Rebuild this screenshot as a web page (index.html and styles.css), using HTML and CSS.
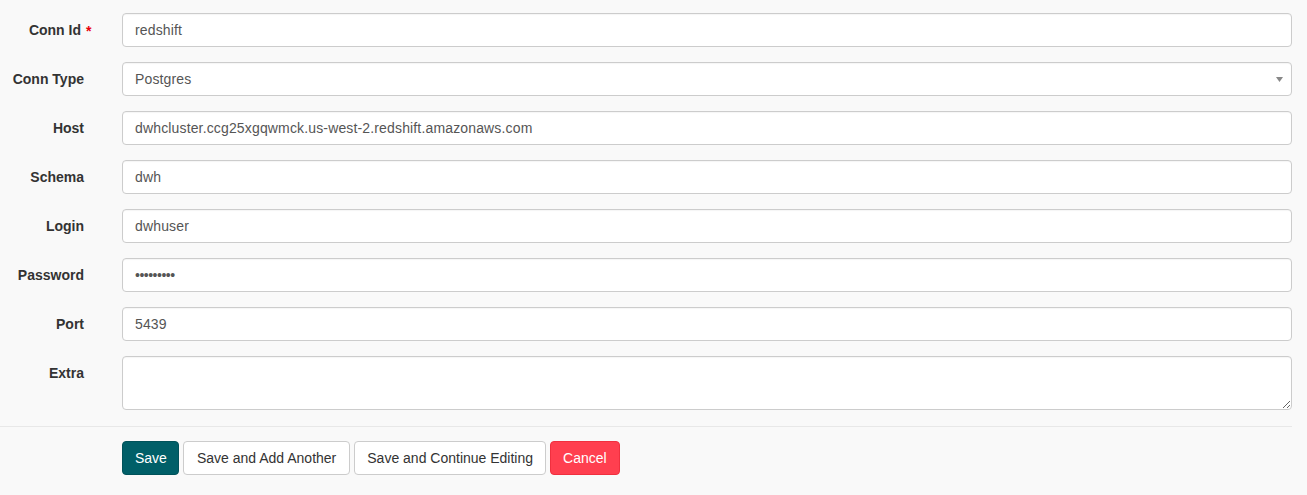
FILE: index.html
```html
<!DOCTYPE html>
<html lang="en">
<head>
<meta charset="utf-8">
<title>Edit Connection</title>
<link rel="stylesheet" href="styles.css">
</head>
<body>
<form class="conn-form">
  <div class="field">
    <label class="field-label"><span class="label-text label-req">Conn Id<span class="req">*</span></span></label>
    <div class="field-control"><input class="text-input" type="text" value="redshift"></div>
  </div>
  <div class="field">
    <label class="field-label">Conn Type</label>
    <div class="field-control">
      <div class="select-box">
        <span class="select-value">Postgres</span>
        <svg class="select-arrow" width="7" height="5" viewBox="0 0 7 5"><path d="M0 0H7L3.5 5Z" fill="#888"/></svg>
      </div>
    </div>
  </div>
  <div class="field">
    <label class="field-label">Host</label>
    <div class="field-control"><input class="text-input" type="text" value="dwhcluster.ccg25xgqwmck.us-west-2.redshift.amazonaws.com"></div>
  </div>
  <div class="field">
    <label class="field-label">Schema</label>
    <div class="field-control"><input class="text-input" type="text" value="dwh"></div>
  </div>
  <div class="field">
    <label class="field-label">Login</label>
    <div class="field-control"><input class="text-input" type="text" value="dwhuser"></div>
  </div>
  <div class="field">
    <label class="field-label">Password</label>
    <div class="field-control"><input class="text-input pw-input" type="password" value="dwhpasswd"></div>
  </div>
  <div class="field">
    <label class="field-label">Port</label>
    <div class="field-control"><input class="text-input" type="text" value="5439"></div>
  </div>
  <div class="field field-last">
    <label class="field-label">Extra</label>
    <div class="field-control"><textarea class="text-area"></textarea></div>
  </div>
  <div class="divider"></div>
  <div class="actions">
    <button type="button" class="btn btn-primary">Save</button>
    <button type="button" class="btn btn-default btn-wide">Save and Add Another</button>
    <button type="button" class="btn btn-default">Save and Continue Editing</button>
    <button type="button" class="btn btn-danger">Cancel</button>
  </div>
</form>
</body>
</html>
```

FILE: styles.css
```css
html, body {
  margin: 0;
  padding: 0;
  background: #f9f9f9;
}

body {
  font-family: "Liberation Sans", Arial, sans-serif;
  font-size: 14px;
  line-height: 20px;
  color: #333;
}

.conn-form {
  padding: 13px 15px 0 0;
  height: 482px;
}

.field {
  display: grid;
  grid-template-columns: 122px 1fr;
  margin-bottom: 15px;
}

.field-last {
  margin-bottom: 15px;
}

.field-label {
  text-align: right;
  padding: 7px 38px 7px 0;
  font-weight: bold;
  color: #333;
}

.label-text {
  position: relative;
}

.label-req {
  margin-right: 3px;
}

.req {
  position: absolute;
  left: 100%;
  top: -1px;
  margin-left: 5px;
  color: #e8000b;
  font-weight: bold;
}

.text-input,
.select-box,
.text-area {
  display: block;
  box-sizing: border-box;
  width: 100%;
  height: 34px;
  margin: 0;
  padding: 6px 12px;
  font-family: "Liberation Sans", Arial, sans-serif;
  font-size: 14px;
  line-height: 20px;
  letter-spacing: 0.15px;
  color: #555;
  background: #fff;
  border: 1px solid #ccc;
  border-radius: 4px;
  outline: none;
  box-shadow: inset 0 1px 1px rgba(0,0,0,0.04);
}

.pw-input {
  letter-spacing: -0.5px;
}

.select-box {
  position: relative;
}

.select-value {
  color: #555;
}

.select-arrow {
  position: absolute;
  right: 8px;
  top: 14px;
}

.text-area {
  height: 54px;
  resize: vertical;
}

.divider {
  border-top: 1px solid #e8e8e8;
  margin-top: 16px;
}

.actions {
  padding: 14px 0 0 122px;
  display: flex;
  gap: 4px;
}

.btn {
  box-sizing: border-box;
  height: 34px;
  padding: 6px 12px;
  font-family: "Liberation Sans", Arial, sans-serif;
  font-size: 14px;
  line-height: 20px;
  border: 1px solid transparent;
  border-radius: 4px;
  cursor: pointer;
}

.btn-primary {
  background: #005f68;
  border-color: #00525a;
  color: #fff;
  padding: 6px 11px 6px 12px;
}

.btn-default {
  background: #fff;
  border-color: #ccc;
  color: #333;
}

.btn-wide {
  padding: 6px 13px;
}

.btn-danger {
  background: #ff3f4f;
  border-color: #f0303f;
  color: #fff;
}
```
